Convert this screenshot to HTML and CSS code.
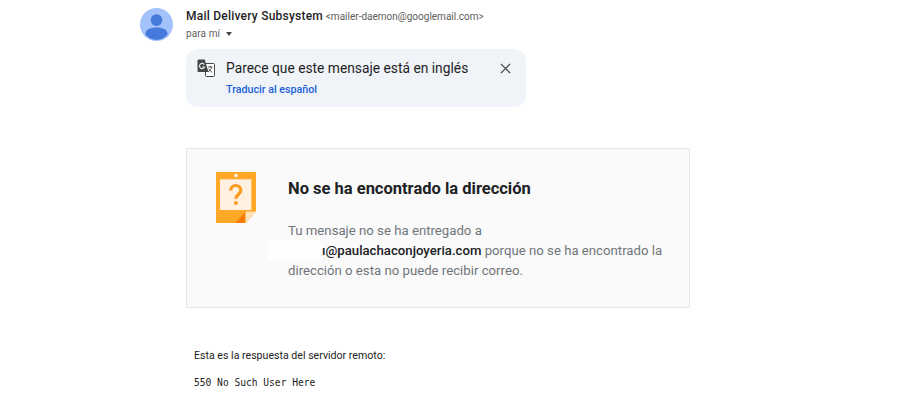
FILE: index.html
```html
<!DOCTYPE html>
<html lang="es">
<head>
<meta charset="utf-8">
<title>Mail Delivery Subsystem</title>
<link rel="stylesheet" href="styles.css">
</head>
<body>
<main class="message">
  <svg class="avatar" viewBox="0 0 34 34" aria-hidden="true">
    <circle cx="17" cy="17" r="17" fill="#a3c2fb"/>
    <circle cx="17" cy="12.5" r="6" fill="#4579dc"/>
    <path d="M5.600 27c0-4.600 5-6.800 11.400-6.800s11.400 2.200 11.400 6.800c-2.400 3.600-6.800 5.800-11.400 5.800s-9-2.200-11.400-5.800z" fill="#4579dc"/>
  </svg>
  <div class="content">
    <div class="sender"><span class="name">Mail Delivery Subsystem</span> <span class="addr">&lt;mailer-daemon@googlemail.com&gt;</span></div>
    <div class="to">para mí <span class="caret"></span></div>
    <section class="banner">
      <div class="banner-row">
        <svg class="translate" viewBox="0 0 18 18" aria-hidden="true">
          <path d="M8 4.500h8.500a1 1 0 0 1 1 1V16.500a1 1 0 0 1-1 1H9.500a1 1 0 0 1-1-1V13" fill="#fff" stroke="#444746" stroke-width="1"/>
          <path d="M1.500.5h6.200L11.500 13H1.500a1 1 0 0 1-1-1V1.500a1 1 0 0 1 1-1z" fill="#444746"/>
          <path d="M7.300 5.600A2.600 2.600 0 1 0 7.500 8H5.200" fill="none" stroke="#e8eaed" stroke-width="1.200"/>
          <path d="M11 8h4.500M13.200 7v1M14.600 8c-.5 2.400-2 4-3.600 5M11.800 10c.6 1.300 2 2.600 3.500 3.200" fill="none" stroke="#444746" stroke-width=".9"/>
        </svg>
        <span class="banner-title">Parece que este mensaje está en inglés</span>
        <svg class="close" viewBox="0 0 12 12" aria-hidden="true">
          <path d="M1 1l10 10M11 1L1 11" fill="none" stroke="#444746" stroke-width="1.400"/>
        </svg>
      </div>
      <a class="banner-link" href="#">Traducir al español</a>
    </section>
    <section class="card">
      <svg class="note" viewBox="0 0 40 51" aria-hidden="true">
        <path d="M0 0h40v39.500L29.500 51H0z" fill="#ffa726"/>
        <rect x="4" y="7.300" width="31.300" height="30.700" fill="#fff0e0"/>
        <circle cx="20" cy="3.600" r="1.900" fill="#fff0e0"/>
        <path d="M29.500 39.500V51H19.500z" fill="#f57c00"/>
        <path d="M29.500 39.500H40L29.500 51z" fill="#ffe2b8"/>
        <path d="M14.800 18.500a5 5 0 0 1 10 0c0 3.700-4.900 3.700-4.900 8.200" fill="none" stroke="#fb9a1c" stroke-width="3.200"/>
        <circle cx="19.900" cy="31" r="2" fill="#fb9a1c"/>
      </svg>
      <div class="card-body">
        <h1 class="card-title">No se ha encontrado la dirección</h1>
        <p class="card-text">Tu mensaje no se ha entregado a<br><span class="redacted"></span><b class="email">ı@paulachaconjoyeria.com</b> porque no se ha encontrado la<br>dirección o esta no puede recibir correo.</p>
      </div>
    </section>
    <section class="response">
      <p class="response-label">Esta es la respuesta del servidor remoto:</p>
      <p class="response-code">550 No Such User Here</p>
    </section>
  </div>
</main>
</body>
</html>
```
FILE: styles.css
```css
* { box-sizing: border-box; }
html, body { margin: 0; height: 100%; background: #fff; overflow: hidden; }
body { font-family: Roboto, "Liberation Sans", sans-serif; color: #1f1f1f; }
.message { display: flex; padding: 8px 0 0 140px; gap: 13px; }
.avatar { width: 33px; height: 33px; flex: none; }
.content { width: 504px; }
.sender { font-size: 11px; line-height: 16px; white-space: nowrap; }
.name { font-size: 12px; font-weight: 500; color: #1f1f1f; letter-spacing: .23px; }
.addr { font-size: 10px; color: #5e5e5e; }
.to { font-size: 10px; line-height: 16px; color: #5e5e5e; margin-top: 1px; display: flex; align-items: center; gap: 6px; letter-spacing: .1px; }
.caret { width: 0; height: 0; border: 3.500px solid transparent; border-top: 4px solid #444746; border-bottom: 0; }
.banner { width: 340px; height: 58px; margin-top: 7px; background: #f0f4f9; border-radius: 12px; padding: 9px 0 0 11px; }
.banner-row { display: flex; align-items: center; height: 20px; }
.translate { width: 18px; height: 18px; flex: none; }
.banner-title { font-size: 13.800px; color: #1f1f1f; margin-left: 11px; white-space: nowrap; }
.close { width: 11px; height: 11px; margin-left: 32px; flex: none; }
.banner-link { display: block; margin: 5px 0 0 29px; font-size: 10.700px; line-height: 14px; font-weight: 500; color: #1a62d6; text-decoration: none; }
.card { height: 160px; margin-top: 41px; background: #fafafa; border: 1px solid #e6e6e6; display: flex; padding: 23px 0 0 29px; gap: 32px; }
.note { width: 40px; height: 51px; flex: none; }
.card-title { margin: 6px 0 0; font-size: 16.500px; line-height: 22px; font-weight: 700; color: #202124; }
.card-text { margin: 21px 0 0; font-size: 13.200px; line-height: 20px; color: #70757a; white-space: nowrap; }
.redacted { display: inline-block; width: 54px; height: 20px; margin-left: -20px; vertical-align: top; background: #fefefe; }
.email { font-weight: 500; color: #202124; }
.response { margin: 41px 0 0 8px; }
.response-label { margin: 0; font-size: 10.600px; line-height: 14px; color: #222; }
.response-code { margin: 13px 0 0; font-family: "DejaVu Sans Mono", monospace; font-size: 9.600px; line-height: 14px; color: #222; }
```
